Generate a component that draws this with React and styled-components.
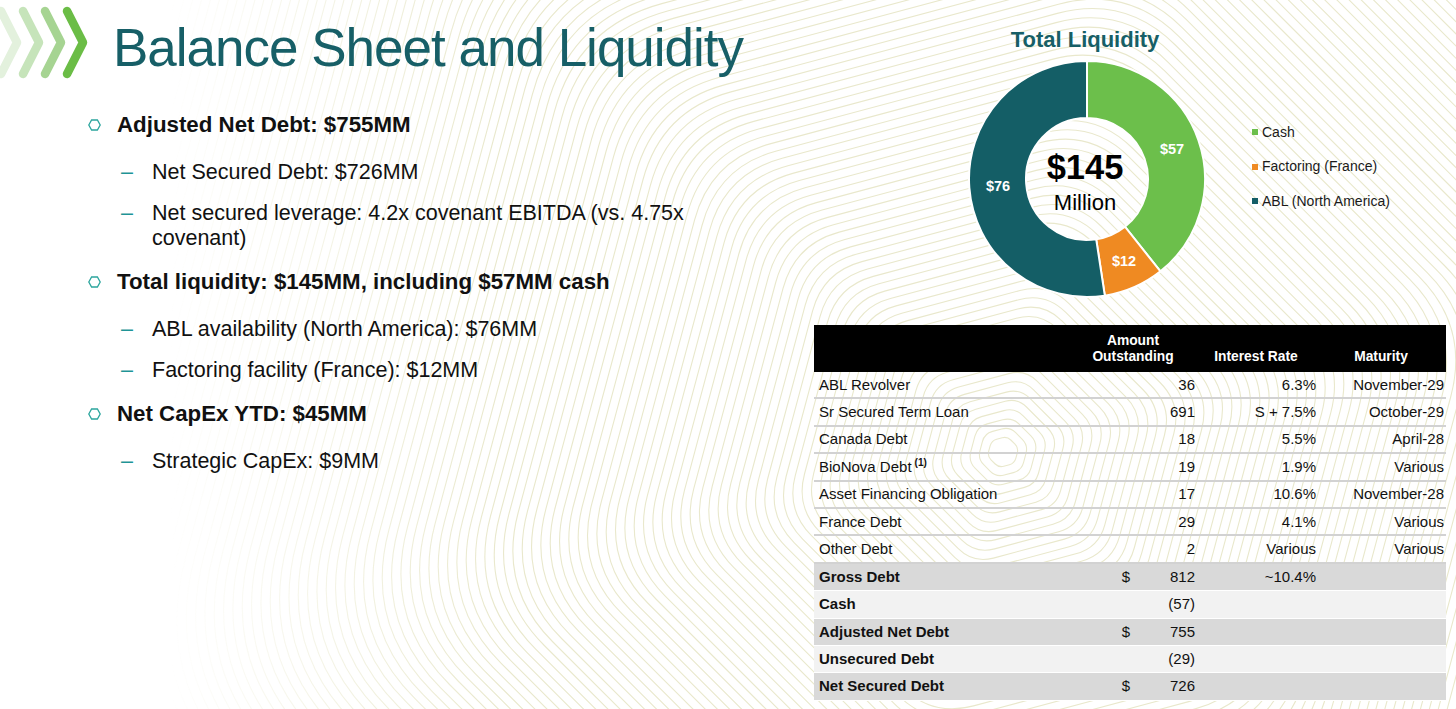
import React from "react";
import styled, { createGlobalStyle } from "styled-components";

const FONT = `"Liberation Sans", Arial, Helvetica, sans-serif`;

const GlobalStyle = createGlobalStyle`
  html, body { margin: 0; padding: 0; background: #ffffff; }
  body { font-family: ${FONT}; }
  * { box-sizing: border-box; }
`;

const Page = styled.div`
  position: relative;
  width: 1456px;
  height: 709px;
  overflow: hidden;
  background: #ffffff;
  font-family: ${FONT};
`;

const Backdrop = styled.svg`
  position: absolute;
  left: 0;
  top: 0;
  width: 1456px;
  height: 709px;
  z-index: 0;
  -webkit-mask-image: linear-gradient(90deg, transparent 170px, #000 500px);
  mask-image: linear-gradient(90deg, transparent 170px, #000 500px);
`;

const Content = styled.div`
  position: relative;
  z-index: 1;
  display: flex;
  width: 100%;
  height: 100%;
`;

const LeftColumn = styled.div`
  width: 814px;
  flex: none;
  display: flex;
  flex-direction: column;
`;

const Header = styled.div`
  display: flex;
  align-items: flex-start;
  height: 84px;
`;

const Title = styled.h1`
  margin: 20.6px 0 0 23px;
  font-size: 53px;
  line-height: 54px;
  font-weight: 400;
  letter-spacing: -1px;
  color: #175f67;
  white-space: nowrap;
`;

const BulletList = styled.ul`
  list-style: none;
  margin: 28.4px 0 0 0;
  padding: 0 0 0 88px;
`;

const BulletItem = styled.li`
  & + & { margin-top: 18px; }
`;

const BulletHead = styled.div`
  display: flex;
  align-items: center;
  font-size: 22.3px;
  line-height: 26px;
  font-weight: 700;
  color: #111111;
`;

const HexMarker = styled.svg`
  flex: none;
  width: 13px;
  height: 12px;
  margin-right: 16px;
  margin-top: -1px;
`;

const SubList = styled.ul`
  list-style: none;
  margin: 22px 0 0 0;
  padding: 0 0 0 33px;
`;

const SubItem = styled.li`
  display: flex;
  align-items: flex-start;
  font-size: 21.5px;
  line-height: 25px;
  color: #111111;
  & + & { margin-top: 16px; }
`;

const Dash = styled.span`
  flex: none;
  width: 31px;
  color: #1f9496;
`;

const SubText = styled.span`
  width: 560px;
`;

const RightColumn = styled.div`
  width: 632px;
  flex: none;
  display: flex;
  flex-direction: column;
`;

const ChartRow = styled.div`
  display: flex;
  align-items: flex-start;
  padding: 27.4px 0 0 154px;
`;

const ChartColumn = styled.div`
  width: 238px;
  display: flex;
  flex-direction: column;
  align-items: center;
`;

const ChartTitle = styled.div`
  font-size: 22px;
  line-height: 26px;
  font-weight: 700;
  color: #175f67;
  margin-left: -4px;
  white-space: nowrap;
`;

const Donut = styled.svg`
  display: block;
  width: 238px;
  height: 238px;
  margin-top: 6.6px;
`;

const Legend = styled.ul`
  list-style: none;
  margin: 94.6px 0 0 46px;
  padding: 0;
  display: flex;
  flex-direction: column;
  gap: 14.5px;
`;

const LegendItem = styled.li`
  display: flex;
  align-items: center;
  font-size: 14px;
  line-height: 20px;
  color: #1a1a1a;
  white-space: nowrap;
`;

const Swatch = styled.span`
  width: 6px;
  height: 6px;
  margin-right: 4px;
  margin-top: 1px;
  background: ${(p) => p.$color};
`;

const DebtTable = styled.div`
  margin-top: 27px;
  width: 632px;
  display: flex;
  flex-direction: column;
`;

const HeaderRow = styled.div`
  display: grid;
  grid-template-columns: 256px 126px 120px 1fr;
  align-items: end;
  height: 47px;
  padding-bottom: 7px;
  background: #000000;
  color: #ffffff;
  font-size: 13.8px;
  line-height: 16px;
  font-weight: 700;
`;

const HeadCell = styled.div`
  text-align: center;
`;

const tones = {
  detail: "transparent",
  dark: "#d9d9d9",
  light: "#f2f2f2",
};

const Row = styled.div`
  display: grid;
  grid-template-columns: 256px 70px 60px 120px 1fr;
  align-items: center;
  height: 27.4px;
  font-size: 15px;
  line-height: 18px;
  color: #111111;
  font-weight: ${(p) => (p.$tone === "detail" ? 400 : 700)};
  background: ${(p) => tones[p.$tone]};
  border-bottom: ${(p) =>
    p.$tone === "detail" ? "2px solid #d2d2d2" : "1.5px solid #ffffff"};
`;

const Cell = styled.div`
  text-align: ${(p) => p.$align || "right"};
  padding-left: ${(p) => (p.$align === "left" ? "5px" : "0")};
  padding-right: ${(p) => p.$pad || 0}px;
  white-space: nowrap;
  font-weight: ${(p) => (p.$light ? 400 : "inherit")};
`;

const Sup = styled.sup`
  font-size: 10px;
  font-weight: 700;
  vertical-align: 6px;
  line-height: 0;
  margin-left: 3px;
`;

/* ---------- drawings ---------- */

function hexRingPath(cx, cy, a, rotDeg) {
  const R = a / Math.cos(Math.PI / 6);
  const v = [];
  for (let i = 0; i < 6; i++) {
    const ang = ((-90 + 60 * i + rotDeg) * Math.PI) / 180;
    v.push([cx + R * Math.cos(ang), cy + R * Math.sin(ang)]);
  }
  const t = Math.min(0.32, (5 + a * 0.16) / R);
  const f = (n) => n.toFixed(1);
  let d = "";
  for (let i = 0; i < 6; i++) {
    const V = v[i];
    const P = v[(i + 5) % 6];
    const N = v[(i + 1) % 6];
    const s = [V[0] + (P[0] - V[0]) * t, V[1] + (P[1] - V[1]) * t];
    const e = [V[0] + (N[0] - V[0]) * t, V[1] + (N[1] - V[1]) * t];
    d += `${i === 0 ? "M" : "L"}${f(s[0])} ${f(s[1])} Q${f(V[0])} ${f(V[1])} ${f(e[0])} ${f(e[1])} `;
  }
  return d + "Z";
}

const rings = [];
for (let a = 14; a < 1250; a += 8.6) rings.push(hexRingPath(1003, 452, a, 15));

function Pattern() {
  return (
    <Backdrop viewBox="0 0 1456 709" aria-hidden="true">
      <g fill="none" stroke="#e9e8cc" strokeWidth="1.1">
        {rings.map((d, i) => (
          <path key={i} d={d} />
        ))}
      </g>
    </Backdrop>
  );
}

function Chevrons() {
  const items = [
    { tip: 17, color: "#e3f1dd" },
    { tip: 39, color: "#c6e4ba" },
    { tip: 61, color: "#a6d492" },
    { tip: 83, color: "#6bbd46" },
  ];
  return (
    <svg width="90" height="84" viewBox="0 0 90 84" style={{ flex: "none" }}>
      {items.map((c) => (
        <polyline
          key={c.tip}
          points={`${c.tip - 16},11 ${c.tip},42.5 ${c.tip - 16},74`}
          fill="none"
          stroke={c.color}
          strokeWidth="8.5"
          strokeLinecap="round"
          strokeLinejoin="round"
        />
      ))}
    </svg>
  );
}

function Hex() {
  return (
    <HexMarker viewBox="0 0 13 12">
      <polygon
        points="0.8,6 3.6,1 9.4,1 12.2,6 9.4,11 3.6,11"
        fill="none"
        stroke="#2ba59d"
        strokeWidth="1.3"
      />
    </HexMarker>
  );
}

const slices = [
  { label: "Cash", value: 57, color: "#6cbf4b" },
  { label: "Factoring (France)", value: 12, color: "#ef8a22" },
  { label: "ABL (North America)", value: 76, color: "#145e66" },
];

function arcPath(cx, cy, R, r, a0, a1) {
  const rad = (d) => ((d - 90) * Math.PI) / 180;
  const p = (rr, d) => [cx + rr * Math.cos(rad(d)), cy + rr * Math.sin(rad(d))];
  const large = a1 - a0 > 180 ? 1 : 0;
  const [x0, y0] = p(R, a0);
  const [x1, y1] = p(R, a1);
  const [x2, y2] = p(r, a1);
  const [x3, y3] = p(r, a0);
  return `M${x0} ${y0} A${R} ${R} 0 ${large} 1 ${x1} ${y1} L${x2} ${y2} A${r} ${r} 0 ${large} 0 ${x3} ${y3} Z`;
}

function DonutChart() {
  const total = slices.reduce((s, x) => s + x.value, 0);
  let acc = 0;
  const cx = 119;
  const cy = 119;
  const labelPos = [
    { x: 85, y: -30, t: "$57" },
    { x: 37, y: 82, t: "$12" },
    { x: -89, y: 7, t: "$76" },
  ];
  return (
    <Donut viewBox="0 0 238 238">
      {slices.map((s) => {
        const a0 = (acc / total) * 360;
        acc += s.value;
        const a1 = (acc / total) * 360;
        return (
          <path
            key={s.label}
            d={arcPath(cx, cy, 118, 61, a0, a1)}
            fill={s.color}
            stroke="#ffffff"
            strokeWidth="2"
          />
        );
      })}
      {labelPos.map((l) => (
        <text
          key={l.t}
          x={cx + l.x}
          y={cy + l.y + 5}
          textAnchor="middle"
          fill="#ffffff"
          fontFamily={FONT}
          fontWeight="700"
          fontSize="14.5"
        >
          {l.t}
        </text>
      ))}
      <text
        x={cx - 2}
        y={cy + 0.4}
        textAnchor="middle"
        fill="#000000"
        fontFamily={FONT}
        fontWeight="700"
        fontSize="34.5"
      >
        $145
      </text>
      <text
        x={cx - 2}
        y={cy + 31}
        textAnchor="middle"
        fill="#000000"
        fontFamily={FONT}
        fontSize="22"
      >
        Million
      </text>
    </Donut>
  );
}

const detailRows = [
  { label: "ABL Revolver", amt: "36", rate: "6.3%", mat: "November-29" },
  { label: "Sr Secured Term Loan", amt: "691", rate: "S + 7.5%", mat: "October-29" },
  { label: "Canada Debt", amt: "18", rate: "5.5%", mat: "April-28" },
  { label: "BioNova Debt", sup: "(1)", amt: "19", rate: "1.9%", mat: "Various" },
  { label: "Asset Financing Obligation", amt: "17", rate: "10.6%", mat: "November-28" },
  { label: "France Debt", amt: "29", rate: "4.1%", mat: "Various" },
  { label: "Other Debt", amt: "2", rate: "Various", mat: "Various" },
];

const summaryRows = [
  { label: "Gross Debt", dollar: true, amt: "812", rate: "~10.4%", tone: "dark" },
  { label: "Cash", amt: "(57)", tone: "light" },
  { label: "Adjusted Net Debt", dollar: true, amt: "755", tone: "dark" },
  { label: "Unsecured Debt", amt: "(29)", tone: "light" },
  { label: "Net Secured Debt", dollar: true, amt: "726", tone: "dark" },
];

function Table() {
  return (
    <DebtTable>
      <HeaderRow>
        <HeadCell />
        <HeadCell>
          Amount
          <br />
          Outstanding
        </HeadCell>
        <HeadCell>Interest Rate</HeadCell>
        <HeadCell>Maturity</HeadCell>
      </HeaderRow>
      {detailRows.map((r) => (
        <Row key={r.label} $tone="detail">
          <Cell $align="left">
            {r.label}
            {r.sup && <Sup>{r.sup}</Sup>}
          </Cell>
          <Cell $pad={10} />
          <Cell $pad={5}>{r.amt}</Cell>
          <Cell $pad={4}>{r.rate}</Cell>
          <Cell $pad={2}>{r.mat}</Cell>
        </Row>
      ))}
      {summaryRows.map((r) => (
        <Row key={r.label} $tone={r.tone}>
          <Cell $align="left">{r.label}</Cell>
          <Cell $pad={10} $light>
            {r.dollar ? "$" : ""}
          </Cell>
          <Cell $pad={5} $light>
            {r.amt}
          </Cell>
          <Cell $pad={4} $light>
            {r.rate || ""}
          </Cell>
          <Cell $pad={2} />
        </Row>
      ))}
    </DebtTable>
  );
}

const bullets = [
  {
    head: "Adjusted Net Debt: $755MM",
    subs: [
      "Net Secured Debt: $726MM",
      "Net secured leverage: 4.2x covenant EBITDA (vs. 4.75x covenant)",
    ],
  },
  {
    head: "Total liquidity: $145MM, including $57MM cash",
    subs: ["ABL availability (North America): $76MM", "Factoring facility (France): $12MM"],
  },
  {
    head: "Net CapEx YTD: $45MM",
    subs: ["Strategic CapEx: $9MM"],
  },
];

export default function App() {
  return (
    <>
      <GlobalStyle />
      <Page>
        <Pattern />
        <Content>
          <LeftColumn>
            <Header>
              <Chevrons />
              <Title>Balance Sheet and Liquidity</Title>
            </Header>
            <BulletList>
              {bullets.map((b) => (
                <BulletItem key={b.head}>
                  <BulletHead>
                    <Hex />
                    {b.head}
                  </BulletHead>
                  <SubList>
                    {b.subs.map((s) => (
                      <SubItem key={s}>
                        <Dash>–</Dash>
                        <SubText>{s}</SubText>
                      </SubItem>
                    ))}
                  </SubList>
                </BulletItem>
              ))}
            </BulletList>
          </LeftColumn>
          <RightColumn>
            <ChartRow>
              <ChartColumn>
                <ChartTitle>Total Liquidity</ChartTitle>
                <DonutChart />
              </ChartColumn>
              <Legend>
                {slices.map((s) => (
                  <LegendItem key={s.label}>
                    <Swatch $color={s.color} />
                    {s.label}
                  </LegendItem>
                ))}
              </Legend>
            </ChartRow>
            <Table />
          </RightColumn>
        </Content>
      </Page>
    </>
  );
}
